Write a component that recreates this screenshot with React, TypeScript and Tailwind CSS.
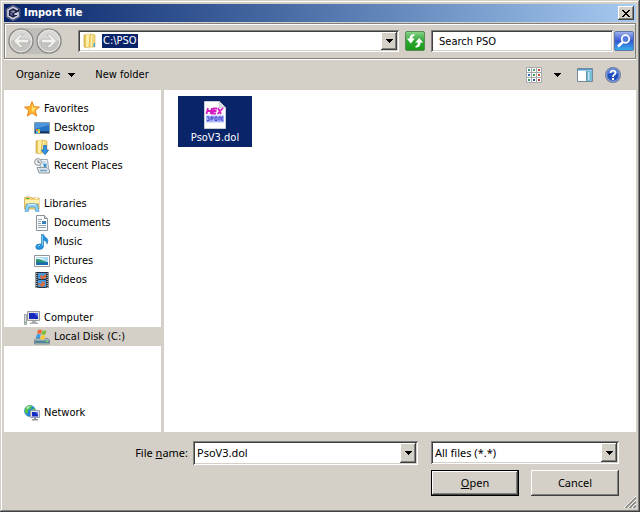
import { useState } from "react";
import type { ReactNode } from "react";
import clsx from "clsx";

const raised =
  "bg-[#d4d0c8] shadow-[inset_-1px_-1px_0_#404040,inset_1px_1px_0_#ffffff,inset_-2px_-2px_0_#808080]";
const sunken =
  "bg-white shadow-[inset_1px_1px_0_#808080,inset_-1px_-1px_0_#ffffff,inset_2px_2px_0_#404040,inset_-2px_-2px_0_#d4d0c8]";

const Svg = ({ children, className = "size-4", box = "0 0 16 16" }: { children: ReactNode; className?: string; box?: string }) => (
  <svg viewBox={box} className={clsx("shrink-0", className)} aria-hidden="true">
    {children}
  </svg>
);

const Caret = () => (
  <Svg className="h-1 w-[7px]" box="0 0 7 4">
    <path d="M0 0h7v1H6v1H5v1H4v1H3V3H2V2H1V1H0z" shapeRendering="crispEdges" />
  </Svg>
);

const CubeIcon = () => (
  <Svg>
    <path d="M8 .3l6.800 3.800v7.800L8 15.700l-6.800-3.800V4.100z" fill="#1b2040" stroke="#7b80a0" strokeWidth=".8" />
    <path d="M12.800 4.800L8 2.300 3 5v6l5 2.700 5-2.700V7.800L9.300 9.500" fill="none" stroke="#c9cce0" strokeWidth="1.800" />
    <path d="M8 5.200l2.600 1.300L8 8 5.400 6.500z" fill="#8d92b4" />
    <path d="M5.200 7L7.600 8.300v2.800L5.200 9.800z" fill="#5c6290" />
  </Svg>
);

const FolderIcon = ({ arrow }: { arrow?: boolean }) => (
  <Svg>
    <path d="M2 2l5-1v14l-5-1z" fill="#e9c95e" stroke="#c99f35" strokeWidth=".6" />
    <path d="M4 1.4L8 1v14l-4-1z" fill="#fff0a8" />
    <path d="M8 1l5 1v12H7z" fill="#f3d778" stroke="#d4ab45" strokeWidth=".6" />
    <path d="M9 2h1v12H9z" fill="#fff1b4" />
    {arrow ? (
      <path d="M9.500 6.500h3V11h2.200L11 15.700 7.300 11h2.200z" fill="#3094e4" stroke="#1565b0" strokeWidth=".7" />
    ) : (
      <path d="M11.500 10h1.500v4h-1.500z" fill="#45a9dd" />
    )}
  </Svg>
);

const StarIcon = () => (
  <Svg>
    <path d="M8 .6l2.100 5.100 5.400.4-4.200 3.500 1.400 5.500L8 12.100l-4.700 3 1.400-5.500L.5 6.100l5.400-.4z" fill="#ffb42d" stroke="#e77d16" strokeWidth=".9" />
    <path d="M8 3l1.300 3.600 3.500.3L10 9.200l.5 2.200L8 9.800z" fill="#ffe06e" />
  </Svg>
);

const DesktopIcon = () => (
  <Svg>
    <path d="M.5 2.500h15v11H.5z" fill="#2b5d9c" stroke="#8799ad" />
    <path d="M1 3h14v8H1z" fill="#2873c4" />
    <path d="M1 3h14v2L1 9z" fill="#4b96dc" />
    <path d="M1 11.500h14V13H1z" fill="#152f58" />
    <path d="M2 9h2v2H2z" fill="#ef6d3b" />
    <path d="M4 9h2v2H4z" fill="#8bd64b" />
    <path d="M2 11h2v2H2z" fill="#4ac0f1" />
    <path d="M4 11h2v2H4z" fill="#ffd34c" />
  </Svg>
);

const RecentIcon = () => (
  <Svg>
    <path d="M5.500 1.500h8l1 9h-8z" fill="#f2f5f7" stroke="#9ba6ae" />
    <path d="M8 4h4M8 6h5" stroke="#8dbbd9" />
    <path d="M9.500 6h3v3h-3z" fill="#3e94cd" />
    <circle cx="4" cy="4" r="3.400" fill="#eef1f3" stroke="#8d9499" />
    <path d="M4 2v2.300h2" fill="none" stroke="#555" strokeWidth=".8" />
    <path d="M3 9.500h10l2.500 2.500v3H5z" fill="#dce2e6" stroke="#8d999f" />
    <path d="M6 12.500h7" stroke="#68a4c8" strokeWidth="1.400" />
  </Svg>
);

const LibrariesIcon = () => (
  <Svg>
    <path d="M.5 2l1-1h5l1 1h7.500v11H.5z" fill="#f2d477" stroke="#cfa850" strokeWidth=".8" />
    <path d="M1 4h14v3H1z" fill="#fff0ad" />
    <path d="M2 2h3v1H2z" fill="#43b337" />
    <path d="M11 2h3v1h-3z" fill="#fff8d9" />
    <path d="M2.500 8.500q5.500-2 11 0l1.500 6.800h-3.400L11 11H5l-.6 4.300H1z" fill="#8fd2f4" stroke="#459ac9" strokeWidth=".8" />
    <path d="M4 9q4-1.500 8 0" fill="none" stroke="#d8f1fc" />
  </Svg>
);

const DocumentIcon = () => (
  <Svg>
    <path d="M2.500.5h8l3 3v12h-11z" fill="#fcfdfe" stroke="#8a929a" />
    <path d="M10.500.5v3h3" fill="#d7dde2" stroke="#8a929a" />
    <path d="M4 4.500h4M4 6.500h3M4 8.500h3M4 10.500h8M4 12.500h8" stroke="#8ea3b4" />
    <path d="M8 6h4v3H8z" fill="#3781bd" />
  </Svg>
);

const MusicIcon = () => (
  <Svg>
    <path d="M7.500.5h2q.5 2 3 3.500 2.500 2 .5 6-.2-3-3.500-4v6.500q-.3 3-4.300 3-3.500 0-3.500-2.500 0-3 4-3h1.800z" fill="#2691dc" stroke="#1870b5" strokeWidth=".6" />
    <path d="M8.300 1.500v10M3.500 12.500q.8-1.300 2.500-1" fill="none" stroke="#8fd6fb" />
  </Svg>
);

const PicturesIcon = () => (
  <Svg>
    <path d="M.5 2.500h15v11H.5z" fill="#fff" stroke="#8f969c" />
    <path d="M2 4h12v8H2z" fill="#a5d9f4" />
    <path d="M2 6q5 0 12 4v2H2z" fill="#2c936e" />
    <path d="M2 9q5 1 12 0v3H2z" fill="#1b69b3" />
    <path d="M2 5.500q4-1 8 1" fill="none" stroke="#f0faff" />
  </Svg>
);

const VideosIcon = () => (
  <Svg>
    <path d="M1.500 0h13v16h-13z" fill="#26313a" />
    <path d="M4 1h8v6H4zM4 8h8v7H4z" fill="#4697dd" />
    <path d="M6 4l2-1 1 1 3-2v4L9 7H7zM4 11l3 1 2-3 2 2v2l-3 2-3-2z" fill="#d46e43" />
    <path d="M2.800 1v15M13.200 1v15" stroke="#e3e8eb" strokeDasharray="1 1" />
  </Svg>
);

const ComputerIcon = () => (
  <Svg>
    <path d="M.5 4.500h2v10h-2z" fill="#d9dcdd" stroke="#8c9295" strokeWidth=".8" />
    <path d="M1 12h1v1H1z" fill="#4eb541" />
    <path d="M3.500 1.500h12v9h-12z" fill="#e2e3df" stroke="#989b99" />
    <path d="M5 3h9v6H5z" fill="#1529bd" />
    <path d="M10 3h4v4z" fill="#5878ed" />
    <path d="M8 11h4v1.500h2V14H6v-1.500h2z" fill="#a9adad" />
  </Svg>
);

const DiskIcon = () => (
  <Svg>
    <path d="M2 9.500L.5 11v4h15v-4L14 9.500z" fill="#b3bdc2" stroke="#68757c" strokeWidth=".7" />
    <path d="M1 11.500h14V14H1z" fill="#4f8796" />
    <path d="M12 12h2v1h-2z" fill="#62ef56" />
    <path d="M4 1q2-1 4 0L7 5Q5 4 3 5z" fill="#ed6935" />
    <path d="M8.500 1.300q2 1 4 0l-1 4q-2 1-4 0z" fill="#79bd39" />
    <path d="M2.800 5.500q2-1 4 0l-1 4q-2-1-4 0z" fill="#399be0" />
    <path d="M7.300 6q2 1 4 0l-1 4q-2 1-4 0z" fill="#ffca35" />
  </Svg>
);

const NetworkIcon = () => (
  <Svg>
    <circle cx="6" cy="6" r="5.600" fill="#2385d3" stroke="#3686b5" strokeWidth=".5" />
    <path d="M2 2q4-3 6-1L7 4 4 5v3L2 9Q-.5 5 2 2zM8 4l3-1v4H8z" fill="#55c553" />
    <path d="M2 3q2-2 4-2L4 4z" fill="#c2f4ba" />
    <path d="M6.500 5.500h9v7h-9z" fill="#dfe2ea" stroke="#969cab" />
    <path d="M8 7h6v4.500H8z" fill="#142cc2" />
    <path d="M11 7h3v3z" fill="#5877ec" />
    <path d="M10 13h2v1h2v1.500H8V14h2z" fill="#8c939b" />
  </Svg>
);

const HexFileIcon = () => (
  <Svg className="h-7 w-[22px]" box="0 0 22 28">
    <path d="M.5.5h15l6 6v21H.5z" fill="#fff" stroke="#c9cbd4" />
    <path d="M15.500.5v6h6z" fill="#dedee6" stroke="#b7b8c6" strokeWidth=".7" />
    <path d="M4 7L2.500 13M8 7l-1.500 6M3.500 10h3.500M13 7.500H9.800L8.500 12.500H12M9.500 10h3M14 7l3 6M19 7l-5.500 6" stroke="#d41cc0" strokeWidth="1.800" fill="none" />
    <path d="M2 14.500h18v6.500H2z" fill="#a9b4fb" />
    <path d="M3 16h2v3.500H3M7 19.500V16h2v2H7M11 16v3.500h2V16zM15 19.500V16h2v3.500M19 16h-1v3.500h1" stroke="#4c42cf" fill="none" />
    <path d="M2 21.500h18" stroke="#d8dfff" />
  </Svg>
);

const NavArrow = ({ flip }: { flip?: boolean }) => (
  <Svg className={clsx("size-[26px]", flip && "-scale-x-100")} box="0 0 26 26">
    <circle cx="13" cy="13" r="12" fill="#c4c3bf" stroke="#858581" strokeWidth="1.200" />
    <path d="M2 13a11 11 0 0 1 22 0q-11-3-22 0z" fill="#d8d7d3" />
    <circle cx="13" cy="13" r="10.800" fill="none" stroke="#e9e8e5" />
    <path d="M12 6.500L5.500 13l6.500 6.500h3.500L11 14.800h9.500v-3.600H11l4.500-4.700z" fill="#f1f1ee" stroke="#b2b1ad" strokeWidth=".7" />
  </Svg>
);

const RefreshIcon = () => (
  <Svg className="size-5" box="0 0 20 20">
    <defs>
      <linearGradient id="green" x2="0" y2="1">
        <stop stopColor="#8ed58e" />
        <stop offset=".5" stopColor="#2ca634" />
        <stop offset="1" stopColor="#1a9a16" />
      </linearGradient>
    </defs>
    <rect x=".5" y=".5" width="19" height="19" rx="1.500" fill="url(#green)" stroke="#568a58" />
    <path d="M9.500 3.200Q4.500 3 4.500 7.500H1.800l4 5 4-5H7.300Q7.200 5 9.500 4.500zM10.500 16.500q5 .3 5-5h2.700l-4-4.500-4 4.500h2.500q.2 3-2.200 3.500z" fill="#fff" />
  </Svg>
);

const SearchIcon = () => (
  <Svg className="size-5" box="0 0 20 20">
    <defs>
      <linearGradient id="blue" x2="0" y2="1">
        <stop stopColor="#a4b5ee" />
        <stop offset=".5" stopColor="#3158d3" />
        <stop offset="1" stopColor="#39b5ec" />
      </linearGradient>
    </defs>
    <rect x=".5" y=".5" width="19" height="19" rx="1.500" fill="url(#blue)" stroke="#6173a9" />
    <circle cx="11.500" cy="8" r="3.800" fill="#557bdc" stroke="#fff" strokeWidth="1.800" />
    <path d="M8.800 11L4 15.500" stroke="#fff" strokeWidth="2.400" />
  </Svg>
);

const dots = ["#32936f", "#4fa05a", "#c33b25", "#2b6cb1", "#31a060", "#cf4b28", "#37906d", "#26549c", "#be2c20"];

const ViewsIcon = () => (
  <Svg>
    {dots.map((color, i) => (
      <g key={i} transform={`translate(${(i % 3) * 5} ${Math.floor(i / 3) * 5})`}>
        <path d="M.5.5h5v5h-5z" fill="#fff" stroke="#a5a9ad" />
        <path d="M2 2h2v2H2z" fill={color} />
      </g>
    ))}
  </Svg>
);

const PreviewIcon = () => (
  <Svg>
    <path d="M.5 1.500h15v13H.5z" fill="#fff" stroke="#74899b" />
    <path d="M1 2h14v1.500H1z" fill="#5598d0" />
    <path d="M10 4h5v10h-5z" fill="#78bed9" />
    <path d="M9.500 4v10" stroke="#648ba3" />
    <path d="M11 5h1.500v8H11z" fill="#b8e3ee" />
  </Svg>
);

const HelpIcon = () => (
  <Svg>
    <circle cx="8" cy="8" r="7.400" fill="#2350bf" stroke="#77839f" strokeWidth="1.200" />
    <circle cx="8" cy="8" r="6.300" fill="none" stroke="#b9c9ee" strokeWidth=".8" />
    <path d="M2.500 7a5.500 5.500 0 0 1 11 0q-5-2-11 0z" fill="#527bd8" />
    <path d="M5.500 6Q5.700 3.700 8 3.700q2.500 0 2.500 2.100 0 1.200-1.300 2Q8 8.500 8 10" fill="none" stroke="#fff" strokeWidth="1.800" />
    <path d="M7 11h2v2H7z" fill="#fff" />
  </Svg>
);

const groups = [
  {
    name: "Favorites",
    icon: <StarIcon />,
    items: [
      { name: "Desktop", icon: <DesktopIcon /> },
      { name: "Downloads", icon: <FolderIcon arrow /> },
      { name: "Recent Places", icon: <RecentIcon /> },
    ],
  },
  {
    name: "Libraries",
    icon: <LibrariesIcon />,
    items: [
      { name: "Documents", icon: <DocumentIcon /> },
      { name: "Music", icon: <MusicIcon /> },
      { name: "Pictures", icon: <PicturesIcon /> },
      { name: "Videos", icon: <VideosIcon /> },
    ],
  },
  {
    name: "Computer",
    icon: <ComputerIcon />,
    items: [{ name: "Local Disk (C:)", icon: <DiskIcon /> }],
  },
  { name: "Network", icon: <NetworkIcon />, items: [] },
];

const Sidebar = () => {
  const [selected, setSelected] = useState("Local Disk (C:)");

  const row = (name: string, icon: ReactNode, indent: string) => (
    <button
      key={name}
      onClick={() => setSelected(name)}
      className={clsx("flex h-[19px] w-full items-center gap-1", indent, selected === name && "bg-[#d4d0c8]")}
    >
      {icon}
      {name}
    </button>
  );

  return (
    <nav className="w-[157px] shrink-0 bg-white pt-[9px] pb-[10px]">
      {groups.map((g) => (
        <div key={g.name} className={clsx(g.name === "Computer" ? "mb-[57px]" : "mb-[19px]", "last:mb-0")}>
          {row(g.name, g.icon, "pl-5")}
          {g.items.map((item) => row(item.name, item.icon, "pl-[30px]"))}
        </div>
      ))}
    </nav>
  );
};

const TitleBar = () => (
  <header className="flex h-[18px] items-center gap-[3px] bg-linear-to-r from-[#0a246a] to-[#a6caf0] pr-[2px] pl-px">
    <CubeIcon />
    <h1 className="flex-1 font-bold text-white">Import file</h1>
    <button aria-label="Close" className={clsx(raised, "flex h-[14px] w-4 items-center justify-center")}>
      <Svg className="h-[7px] w-2" box="0 0 8 7">
        <path d="M0 0h2v1h1v1h2V1h1V0h2v1H7v1H6v1H5v1h1v1h1v1h1v1H6V6H5V5H3v1H2v1H0V6h1V5h1V4h1V3H2V2H1V1H0z" shapeRendering="crispEdges" />
      </Svg>
    </button>
  </header>
);

const AddressBar = () => (
  <div className="mt-px flex h-9 items-center border border-[#808080] pr-px pl-[3px] shadow-[inset_1px_1px_0_#ffffff,0_1px_0_#ffffff]">
    <div className="flex gap-[2px] rounded-full bg-[#bfbebb]">
      <button aria-label="Back">
        <NavArrow />
      </button>
      <button aria-label="Forward">
        <NavArrow flip />
      </button>
    </div>
    <div className={clsx(sunken, "ml-4 flex h-[22px] flex-1 items-center p-[2px] pl-1")}>
      <FolderIcon />
      <div className="ml-1 flex flex-1 items-center">
        <input
          aria-label="Address"
          defaultValue="C:\PSO"
          className="field-sizing-content h-[14px] bg-[#0a246a] px-px text-white outline-none"
        />
      </div>
      <button aria-label="Previous locations" className={clsx(raised, "flex h-[18px] w-4 items-center justify-center")}>
        <Caret />
      </button>
    </div>
    <button aria-label="Refresh" className="ml-[6px]">
      <RefreshIcon />
    </button>
    <input
      aria-label="Search PSO"
      placeholder="Search PSO"
      className={clsx(sunken, "ml-[6px] h-[22px] w-[182px] px-2 outline-none placeholder:text-black")}
    />
    <button aria-label="Search" className="ml-px">
      <SearchIcon />
    </button>
  </div>
);

export default function App() {
  return (
    <main className="min-h-screen bg-[#d4d0c8] p-1 font-['DejaVu_Sans_Condensed','DejaVu_Sans',sans-serif] text-[11px] leading-[14px] text-black shadow-[inset_-1px_-1px_0_#404040,inset_1px_1px_0_#d4d0c8,inset_-2px_-2px_0_#808080,inset_2px_2px_0_#ffffff] [font-stretch:condensed]">
      <TitleBar />
      <AddressBar />
      <div className="flex h-[31px] items-center px-3">
        <button className="flex items-center gap-2">
          Organize <Caret />
        </button>
        <button className="ml-5">New folder</button>
        <div className="ml-auto flex items-center pr-[3px]">
          <button aria-label="Change view">
            <ViewsIcon />
          </button>
          <button aria-label="More view options" className="ml-3 flex h-4 items-center">
            <Caret />
          </button>
          <button aria-label="Preview pane" className="ml-4">
            <PreviewIcon />
          </button>
          <button aria-label="Help" className="ml-3">
            <HelpIcon />
          </button>
        </div>
      </div>

      <div className="flex gap-[3px]">
        <Sidebar />
        <section aria-label="Files" className="flex-1 bg-white px-[14px] py-[6px]">
          <button className="flex h-[51px] w-[74px] flex-col items-center gap-[2px] bg-[#0a246a] pt-[5px] text-white">
            <HexFileIcon />
            PsoV3.dol
          </button>
        </section>
      </div>

      <form
        onSubmit={(e) => e.preventDefault()}
        className="flex items-start justify-end gap-[13px] pt-[9px] pr-[17px] font-['Noto_Sans',sans-serif] [font-stretch:normal]"
      >
        <div className="flex items-center gap-[5px]">
          <label htmlFor="filename">
            File <u>n</u>ame:
          </label>
          <div className={clsx(sunken, "flex h-6 w-[225px] p-[2px]")}>
            <input id="filename" defaultValue="PsoV3.dol" className="min-w-0 flex-1 px-[2px] outline-none" />
            <button
              type="button"
              aria-label="Recent file names"
              className={clsx(raised, "flex w-4 items-center justify-center")}
            >
              <Caret />
            </button>
          </div>
        </div>
        <div className="flex w-[188px] flex-col gap-[6px]">
          <div className={clsx(sunken, "relative h-[23px] p-[2px]")}>
            <select aria-label="File type" className="h-[19px] w-full appearance-none px-[2px] outline-none">
              <option>All files (*.*)</option>
            </select>
            <span className={clsx(raised, "pointer-events-none absolute inset-y-[2px] right-[2px] flex w-4 items-center justify-center")}>
              <Caret />
            </span>
          </div>
          <div className="grid grid-cols-2 gap-3">
            <button
              type="submit"
              className="h-[26px] border border-black bg-[#d4d0c8] shadow-[inset_-1px_-1px_0_#404040,inset_1px_1px_0_#ffffff,inset_-2px_-2px_0_#808080]"
            >
              <u>O</u>pen
            </button>
            <button type="button" className={clsx(raised, "h-[26px]")}>
              Cancel
            </button>
          </div>
        </div>
      </form>
      <div className="flex justify-end">
        <Svg className="size-3" box="0 0 12 12">
          <path d="M0 12L12 0M4 12l8-8M8 12l4-4" stroke="#fff" />
          <path d="M1.500 12L12 1.500M5.500 12L12 5.500M9.500 12L12 9.500" stroke="#808080" strokeWidth="1.500" />
        </Svg>
      </div>
    </main>
  );
}
